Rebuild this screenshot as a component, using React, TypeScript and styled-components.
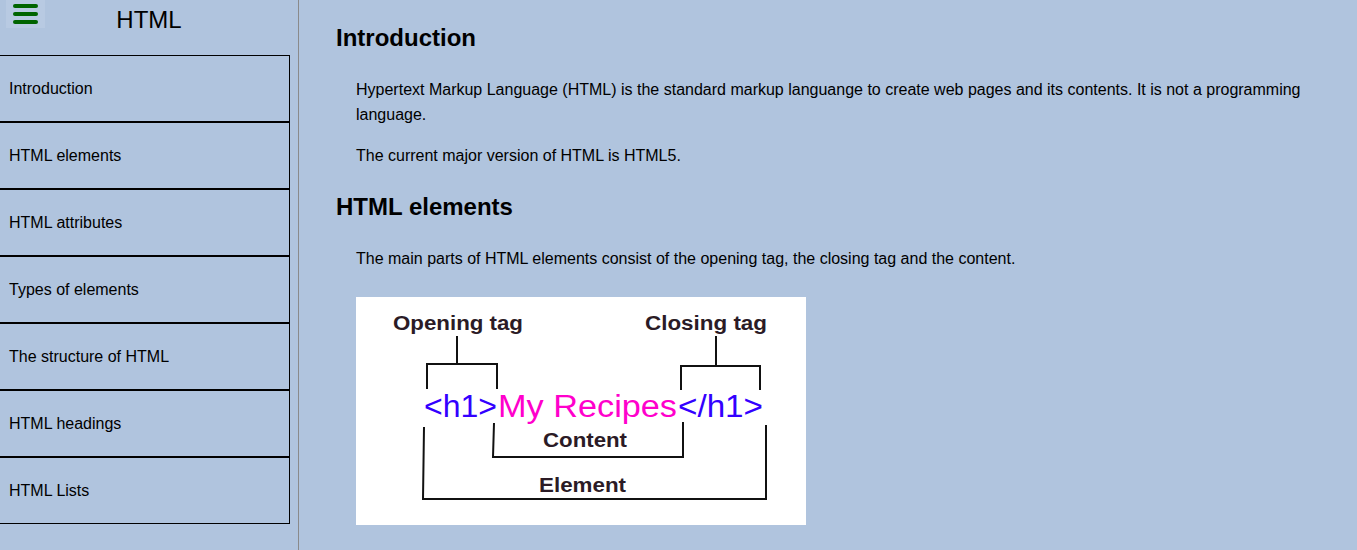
import React from "react";
import styled, { createGlobalStyle } from "styled-components";

const GlobalStyle = createGlobalStyle`
  html, body {
    margin: 0;
    padding: 0;
    background: #b0c4de;
    font-family: "Liberation Sans", Arial, sans-serif;
    color: #000;
  }
`;

const Page = styled.div`
  display: flex;
  min-height: 550px;
  background: #b0c4de;
`;

const Sidebar = styled.aside`
  width: 298px;
  flex: 0 0 298px;
  border-right: 1px solid #8a8a8a;
  display: flex;
  flex-direction: column;
`;

const Header = styled.header`
  height: 55px;
  display: grid;
  grid-template-columns: 51px 1fr 51px;
  align-items: start;
`;

const MenuButton = styled.button`
  margin: 0 0 0 6px;
  width: 39px;
  height: 28px;
  padding: 4px 0 0 7px;
  border: none;
  background: #b8cae2;
  display: flex;
  flex-direction: column;
  gap: 4px;
  cursor: pointer;
`;

const MenuLine = styled.span`
  display: block;
  width: 25px;
  height: 4px;
  border-radius: 2px;
  background: #006400;
`;

const Title = styled.h1`
  margin: 6px 0 0;
  font-size: 24px;
  line-height: 28px;
  font-weight: normal;
  text-align: center;
`;

const NavList = styled.ul`
  list-style: none;
  margin: 0;
  padding: 0;
`;

const NavItem = styled.li`
  box-sizing: border-box;
  width: 290px;
  height: 67px;
  border: 1px solid #000;
  border-left: none;
  display: flex;
  align-items: center;
  padding-left: 9px;
  font-size: 16px;
`;

const Main = styled.main`
  flex: 1;
  padding: 24px 37px 0 37px;
`;

const SectionTitle = styled.h2<{ $first?: boolean }>`
  margin: ${(p) => (p.$first ? "0" : "25px")} 0 25px;
  font-size: 24px;
  line-height: 28px;
  font-weight: bold;
`;

const Para = styled.p`
  margin: 0 0 16px 20px;
  font-size: 16px;
  line-height: 25px;
`;

const Figure = styled.figure`
  margin: 26px 0 0 20px;
  width: 450px;
  height: 228px;
  background: #fff;
`;

const Diagram = () => {
  const label = "#2b1b26";
  const blue = "#3300ff";
  const pink = "#ff00cc";
  return (
    <svg width="450" height="228" viewBox="0 0 450 228">
      <g fontFamily="'Liberation Sans', Arial, sans-serif" fontWeight="bold" fill={label} fontSize="20">
        <text x="37" y="33" textLength="130" lengthAdjust="spacingAndGlyphs">Opening tag</text>
        <text x="289" y="33" textLength="122" lengthAdjust="spacingAndGlyphs">Closing tag</text>
        <text x="187" y="150" textLength="84" lengthAdjust="spacingAndGlyphs">Content</text>
        <text x="183" y="195" textLength="87" lengthAdjust="spacingAndGlyphs">Element</text>
      </g>
      <g fontFamily="'Liberation Sans', Arial, sans-serif" fontSize="31">
        <text x="68" y="120" fill={blue} textLength="73" lengthAdjust="spacingAndGlyphs">&lt;h1&gt;</text>
        <text x="142" y="120" fill={pink} textLength="179" lengthAdjust="spacingAndGlyphs">My Recipes</text>
        <text x="322" y="120" fill={blue} textLength="85" lengthAdjust="spacingAndGlyphs">&lt;/h1&gt;</text>
      </g>
      <g stroke="#111" strokeWidth="2" fill="none">
        <path d="M101 39 V67 M71 92 V67 H141 V92" />
        <path d="M360 39 V69 M325 93 V69 H404 V93" />
        <path d="M138 126 L137 160 H327 V125" />
        <path d="M68 130 L67 202 H410 V128" />
      </g>
    </svg>
  );
};

const navItems = [
  "Introduction",
  "HTML elements",
  "HTML attributes",
  "Types of elements",
  "The structure of HTML",
  "HTML headings",
  "HTML Lists",
];

export default function App() {
  return (
    <>
      <GlobalStyle />
      <Page>
        <Sidebar>
          <Header>
            <MenuButton aria-label="menu">
              <MenuLine />
              <MenuLine />
              <MenuLine />
            </MenuButton>
            <Title>HTML</Title>
          </Header>
          <NavList>
            {navItems.map((item) => (
              <NavItem key={item}>{item}</NavItem>
            ))}
          </NavList>
        </Sidebar>
        <Main>
          <SectionTitle $first>Introduction</SectionTitle>
          <Para>
            Hypertext Markup Language (HTML) is the standard markup languange to create web pages and its
            contents. It is not a programming language.
          </Para>
          <Para>The current major version of HTML is HTML5.</Para>
          <SectionTitle>HTML elements</SectionTitle>
          <Para>The main parts of HTML elements consist of the opening tag, the closing tag and the content.</Para>
          <Figure>
            <Diagram />
          </Figure>
        </Main>
      </Page>
    </>
  );
}
